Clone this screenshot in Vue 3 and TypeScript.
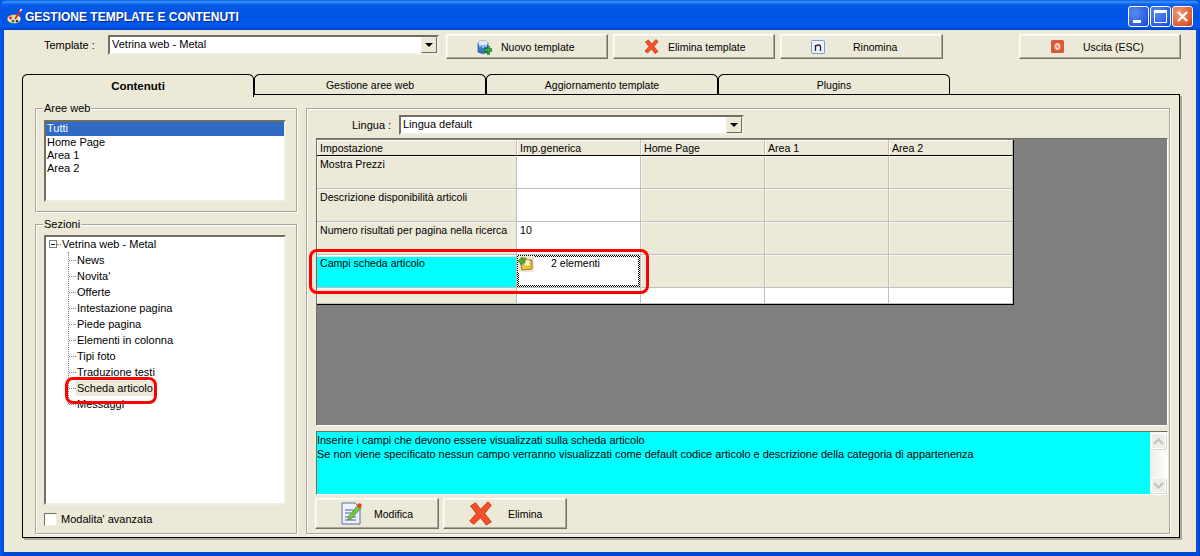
<script setup lang="ts">
interface Row { label: string; value: string; cls: string }
const tabs: string[] = ['Contenuti', 'Gestione aree web', 'Aggiornamento template', 'Plugins']
const areas: string[] = ['Tutti', 'Home Page', 'Area 1', 'Area 2']
const sections: string[] = ['News', "Novita'", 'Offerte', 'Intestazione pagina', 'Piede pagina', 'Elementi in colonna', 'Tipi foto', 'Traduzione testi', 'Scheda articolo', 'Messaggi']
const heads: string[] = ['Impostazione', 'Imp.generica', 'Home Page', 'Area 1', 'Area 2']
const rows: Row[] = [
  { label: 'Mostra Prezzi', value: '', cls: 'tall' },
  { label: 'Descrizione disponibilità articoli', value: '', cls: 'tall' },
  { label: 'Numero risultati per pagina nella ricerca', value: '10', cls: 'tall' },
]
</script>

<template>
  <div class="window">
    <header class="titlebar">
      <svg class="appicon" width="18" height="16" viewBox="0 0 18 16">
        <ellipse cx="8" cy="10" rx="7" ry="4.5" fill="#e8e4d8" stroke="#555" stroke-width=".7" />
        <circle cx="4.5" cy="9" r="1.4" fill="#e02020" />
        <circle cx="7" cy="12" r="1.5" fill="#1a8a2a" />
        <circle cx="11" cy="12" r="1.3" fill="#333" />
        <circle cx="6.5" cy="7" r="1.2" fill="#f0c020" />
        <path d="M9 10 L15 1" stroke="#e03020" stroke-width="2" />
        <path d="M14 2 L16 0" stroke="#fff" stroke-width="1.5" />
      </svg>
      <span class="title">GESTIONE TEMPLATE E CONTENUTI</span>
      <div class="wincontrols">
        <span class="wbtn"><i class="min"></i></span>
        <span class="wbtn"><i class="max"></i></span>
        <span class="wbtn close">
          <svg width="13" height="13" viewBox="0 0 13 13"><path d="M2 2 L11 11 M11 2 L2 11" stroke="#fff" stroke-width="2.4" /></svg>
        </span>
      </div>
    </header>

    <main class="client">
      <div class="toolbar">
        <span class="tlabel">Template :</span>
        <div class="combo tcombo"><span class="combotext">Vetrina web - Metal</span><span class="arrow"><i></i></span></div>
        <button class="btn tb b-new">
          <svg width="15" height="16" viewBox="0 0 15 16">
            <path d="M1 4 L1 13 Q6 16 11 13 L11 4 Z" fill="#3a78c8" stroke="#1c4a90" stroke-width=".7" />
            <ellipse cx="6" cy="4" rx="5" ry="2.4" fill="#dfe8f4" stroke="#8a9ab8" stroke-width=".7" />
            <path d="M3 2 L3 8 M6 1.5 L6 9 M9 2 L9 8" stroke="#e8eef8" stroke-width="1.2" />
            <path d="M8 9 H11 V7 H13 V9 H15 V12 H13 V15 H11 V12 H8 Z" transform="translate(-.6 .4)" fill="#30b040" stroke="#106020" stroke-width=".7" />
          </svg>
          <span>Nuovo template</span>
        </button>
        <button class="btn tb b-del">
          <svg width="15" height="15" viewBox="0 0 30 30"><path d="M3 6 L9 2 L15 10 L24 1 L28 5 L20 15 L28 25 L22 29 L15 20 L7 28 L2 24 L10 15 Z" fill="#f4502a" stroke="#c83010" stroke-width="1.5" /></svg>
          <span>Elimina template</span>
        </button>
        <button class="btn tb b-ren">
          <svg width="14" height="14" viewBox="0 0 14 14">
            <rect x=".5" y=".5" width="13" height="13" rx="1" fill="#eef3fb" stroke="#7a9ad8" />
            <path d="M4.5 11 V5 M4.5 6.5 Q5.5 5 7.5 5 Q9.5 5 9.5 7 V11" fill="none" stroke="#222" stroke-width="1.3" />
          </svg>
          <span>Rinomina</span>
        </button>
        <button class="btn tb b-exit">
          <svg width="13" height="13" viewBox="0 0 13 13">
            <rect width="13" height="13" rx="1.5" fill="#d8583a" />
            <circle cx="6.5" cy="6.5" r="3.6" fill="#e88a70" />
            <ellipse cx="6.5" cy="6.5" rx="1.8" ry="2.6" fill="none" stroke="#fbe4d8" stroke-width="1.1" />
          </svg>
          <span>Uscita (ESC)</span>
        </button>
      </div>

      <nav class="tabs">
        <div v-for="(t, i) in tabs" :key="t" class="tab" :class="{ active: i === 0 }">{{ t }}</div>
      </nav>

      <section class="panel">
        <div class="leftcol">
          <div class="group g-areas">
            <span class="legend">Aree web</span>
            <ul class="sunken listbox">
              <li v-for="(a, i) in areas" :key="a" :class="{ sel: i === 0 }">{{ a }}</li>
            </ul>
          </div>
          <div class="group g-sections">
            <span class="legend">Sezioni</span>
            <div class="sunken tree">
              <div class="root"><span class="exp"><i></i></span><span class="hdash"></span><span>Vetrina web - Metal</span></div>
              <ul class="children">
                <li v-for="s in sections" :key="s">
                  <span class="hdash"></span><span class="node" :class="{ hl: s === 'Scheda articolo' }">{{ s }}</span>
                </li>
              </ul>
              <span class="redbox rb-tree"></span>
            </div>
            <label class="check"><span class="cbox"></span>Modalita' avanzata</label>
          </div>
        </div>

        <div class="rightframe">
          <div class="langrow">
            <span class="llabel">Lingua :</span>
            <div class="combo lcombo"><span class="combotext">Lingua default</span><span class="arrow"><i></i></span></div>
          </div>
          <div class="gridbox">
            <div class="table">
              <div v-for="h in heads" :key="h" class="cell head">{{ h }}</div>
              <template v-for="r in rows" :key="r.label">
                <div class="cell fixed tall">{{ r.label }}</div>
                <div class="cell val tall">{{ r.value }}</div>
                <div class="cell fixed tall"></div>
                <div class="cell fixed tall"></div>
                <div class="cell fixed tall"></div>
              </template>
              <div class="cell cyan tall">Campi scheda articolo</div>
              <div class="cell focus tall">
                <div class="focusin">
                  <svg class="folder" width="16" height="16" viewBox="0 0 16 16">
                    <rect width="16" height="16" fill="#ece9d8" />
                    <path d="M2 4 L4 14 L14 13 L14 4 L9 4 L8 2 L4 2 Z" fill="#f0c840" stroke="#a07818" />
                    <path d="M6 4 H12 V10 H6 Z" fill="#fff6c0" stroke="#c0a040" stroke-width=".6" />
                    <path d="M0 5 L4 1 L4 3 L7 3 L7 7 L4 7 L4 9 Z" fill="#3cb040" stroke="#1a6a20" stroke-width=".5" />
                  </svg>
                  <span>2 elementi</span>
                </div>
              </div>
              <div class="cell fixed tall"></div>
              <div class="cell fixed tall"></div>
              <div class="cell fixed tall"></div>
              <div class="cell fixed"></div>
              <div class="cell val"></div>
              <div class="cell val"></div>
              <div class="cell val"></div>
              <div class="cell val"></div>
            </div>
            <span class="redbox rb-grid"></span>
          </div>
          <div class="desc">
            <div class="desctext">
              Inserire i campi che devono essere visualizzati sulla scheda articolo<br />
              Se non viene specificato nessun campo verranno visualizzati come default codice articolo e descrizione della categoria di appartenenza
            </div>
            <div class="scroll">
              <span class="sbtn"><svg width="11" height="7" viewBox="0 0 11 7"><path d="M1 6 L5.5 1.5 L10 6" fill="none" stroke="#c4c2b8" stroke-width="2" /></svg></span>
              <span class="sbtn"><svg width="11" height="7" viewBox="0 0 11 7"><path d="M1 1 L5.5 5.5 L10 1" fill="none" stroke="#c4c2b8" stroke-width="2" /></svg></span>
            </div>
          </div>
          <div class="actions">
            <button class="btn big b-mod">
              <svg width="21" height="23" viewBox="0 0 21 23">
                <path d="M1 1 H14 L19 6 V22 H1 Z" fill="#eef1f8" stroke="#5a6ea8" />
                <path d="M4 8 H12 M4 11 H10 M4 15 H15 M4 18 H15" stroke="#9aa8cc" stroke-width="2" />
                <path d="M7 18 L8 14 L17 3 L20 6 L10 17 Z" fill="#78c840" stroke="#3a8020" stroke-width=".7" />
                <circle cx="18.5" cy="3.5" r="2.2" fill="#e04030" />
              </svg>
              <span>Modifica</span>
            </button>
            <button class="btn big b-eli">
              <svg width="25" height="25" viewBox="0 0 30 30"><path d="M3 6 L9 2 L15 10 L24 1 L28 5 L20 15 L28 25 L22 29 L15 20 L7 28 L2 24 L10 15 Z" fill="#f4502a" stroke="#c83010" stroke-width="1" /></svg>
              <span>Elimina</span>
            </button>
          </div>
        </div>
      </section>
    </main>
  </div>
</template>

<style>
html, body { margin: 0; padding: 0; background: #0054e3; overflow: hidden; }
</style>

<style scoped>
* { box-sizing: border-box; }
.window {
  width: 1200px; height: 556px; display: flex; flex-direction: column;
  padding: 0 4px 4px; font: 11px/15px "Liberation Sans", Arial, sans-serif; color: #000;
  background: linear-gradient(90deg, #0a5ae8 0, #0055e5 2px, #0348d0 4px, #0348d0 1196px, #0055e5 1198px, #0030b8 100%);
  border-radius: 7px 7px 0 0; overflow: hidden;
}
.titlebar {
  height: 30px; margin: 0 -4px; padding: 3px 7px 0 6px; display: flex; align-items: center; flex: none;
  background: linear-gradient(180deg, #0a5fe0 0, #3a93ff 2px, #0d63ea 4px, #0256e6 9px, #0054e3 18px, #0058ee 25px, #0056e8 27px, #0040c8 30px);
}
.appicon { flex: none; }
.title {
  margin: 1px 0 0 1px; color: #fff; font-weight: 700; font-size: 12px; text-shadow: 1px 1px 0 #0f2a80; white-space: nowrap;
}
.wincontrols { margin-left: auto; display: flex; gap: 1px; }
.wbtn {
  position: relative; width: 21px; height: 21px; border: 1px solid #fff; border-radius: 3px; display: flex; align-items: center; justify-content: center;
  background: radial-gradient(circle at 30% 30%, #5a8cf0, #2c5ce0 70%, #1c44c0);
}
.wbtn.close { background: radial-gradient(circle at 30% 30%, #f09a78, #df5a30 70%, #c03818); }
.wbtn i.min { position: absolute; left: 4px; bottom: 3px; width: 8px; height: 3px; background: #fff; }
.wbtn i.max { width: 13px; height: 13px; border: 1px solid #fff; border-top-width: 3px; }

.client { flex: 1; min-height: 0; background: #ece9d8; display: flex; flex-direction: column; }

.toolbar { height: 25px; margin-top: 4px; display: flex; flex: none; position: relative; }
.tlabel { margin: 4px 0 0 40px; width: 64px; }
.combo {
  height: 20px; background: #fff; border: 2px solid; border-color: #716f64 #f1efe2 #f1efe2 #716f64;
  display: flex; justify-content: space-between; align-items: stretch;
}
.tcombo { width: 331px; margin-top: 1px; }
.combotext { padding: 0 0 0 2px; line-height: 15px; }
.arrow {
  width: 16px; background: #ece9d8; border: 1px solid; border-color: #f1efe2 #716f64 #716f64 #f1efe2; display: flex; align-items: center; justify-content: center;
}
.arrow i { width: 0; height: 0; border: 4px solid transparent; border-top: 4px solid #000; border-bottom: 0; }

.btn {
  display: flex; align-items: center; padding: 0; background: #ece9d8; font: inherit; color: #000;
  border: 1px solid; border-color: #fff #716f64 #716f64 #fff; box-shadow: inset -1px -1px 0 #aca899, inset 1px 1px 0 #f6f4ea; height: 25px;
}
.btn span { position: relative; top: 1px; font-size: 10.5px; }
.tb { width: 162px; margin-left: 6px; }
.tcombo + .tb { margin-left: 7px; }
.b-new { padding-left: 30px; gap: 9px; }
.b-del { padding-left: 30px; gap: 9px; margin-left: 5px; }
.b-ren { padding-left: 30px; gap: 28px; margin-left: 5px; width: 163px; }
.b-exit { padding-left: 31px; gap: 19px; margin-left: 76px; }

.tabs { display: flex; margin: 15px 0 0 18px; height: 20px; flex: none; position: relative; z-index: 1; }
.tab {
  width: 232px; height: 21px; text-align: center; line-height: 21px; background: #ece9d8; font-size: 10.5px;
  border: 1px solid #000; border-left-width: 1px; border-radius: 6px 6px 0 0 / 5px 5px 0 0; margin-right: 0;
}
.tab.active { font-weight: 700; height: 23px; border-bottom: 0; border-right-color: #000; font-size: 11.5px; line-height: 23px; }

.panel {
  width: 1158px; height: 444px; margin-left: 18px; flex: none; border: 1px solid #000; box-shadow: 2px 2px 0 #aca899;
  display: flex; padding: 13px 9px 3px 12px; gap: 9px;
}
.leftcol { width: 262px; display: flex; flex-direction: column; gap: 12px; }
.group { border: 1px solid #aca899; box-shadow: inset 1px 1px 0 #fff, 1px 1px 0 #fff; padding: 0 10px 0 8px; display: flex; flex-direction: column; }
.g-areas { height: 104px; }
.g-sections { height: 310px; }
.legend { margin: -8px 0 0 -1px; padding: 0 1px; align-self: flex-start; background: #ece9d8; height: 15px; }
.sunken { background: #fff; border: 2px solid; border-color: #716f64 #f1efe2 #f1efe2 #716f64; margin: 0; padding: 0; list-style: none; }
.listbox { height: 82px; margin-top: 4px; padding-top: 0; }
.listbox li { height: 13px; line-height: 13px; padding-left: 1px; white-space: nowrap; }
.listbox li.sel { background: #316ac5; color: #fff; height: 14px; }

.tree { height: 270px; margin-top: 3px; position: relative; padding: 0 0 0 3px; }
.root { display: flex; align-items: center; height: 14px; margin-bottom: 1px; }
.exp { width: 8px; height: 8px; border: 1px solid #808080; display: flex; align-items: center; justify-content: center; }
.exp i { width: 4px; height: 1px; background: #000; }
.root .hdash { width: 4px; margin-right: 1px; }
.hdash { display: inline-block; height: 1px; border-top: 1px dotted #808080; }
.children { list-style: none; margin: 0 0 0 19px; padding: 0; border-left: 1px dotted #808080; height: 152px; }
.children li { height: 16px; display: flex; align-items: center; }
.children .hdash { width: 7px; }
.node { padding: 0 1px; white-space: nowrap; }
.node.hl { background: #ece9d8; }

.redbox { position: absolute; border: 3px solid #f00; border-radius: 8px; pointer-events: none; z-index: 3; }
.rb-tree { left: 19px; top: 140px; width: 92px; height: 27px; }
.rb-grid { left: -8px; top: 110px; width: 340px; height: 45px; }

.check { display: flex; align-items: center; margin-top: 7px; height: 15px; }
.cbox { width: 13px; height: 13px; background: #fff; border: 1px solid; border-color: #716f64 #f1efe2 #f1efe2 #716f64; margin-right: 4px; flex: none; }

.rightframe { width: 864px; height: 426px; border: 1px solid #aca899; box-shadow: inset 1px 1px 0 #fff, 1px 1px 0 #fff; padding: 6px 0 0 9px; display: flex; flex-direction: column; }
.langrow { display: flex; height: 20px; flex: none; }
.llabel { margin: 3px 0 0 36px; width: 47px; }
.lcombo { width: 345px; }

.gridbox {
  position: relative; margin-top: 3px; width: 852px; height: 288px; flex: none; background: #808080; padding: 1px;
  border-top: 1px solid #716f64; border-left: 1px solid #716f64; border-right: 1px solid #fff; border-bottom: 1px solid #fff;
}
.table {
  display: grid; grid-template-columns: 200px 124px 124px 124px 124px; grid-template-rows: 16px repeat(4, 33px) 16px;
  width: 696px; border-right: 1px solid #000; border-bottom: 1px solid #000; box-sizing: content-box; margin-left: -1px;
}
.cell { border-right: 1px solid #c0bebe; border-bottom: 1px solid #c0bebe; padding: 1px 0 0 3px; white-space: nowrap; background: #ece9d8; font-size: 10.6px; line-height: 14px; overflow: hidden; }
.cell.head { border-bottom: 1px solid #000; box-shadow: inset 1px 1px 0 #fff; }
.cell.fixed { box-shadow: inset 1px 1px 0 #f8f7f0; }
.cell.val { background: #fff; }
.cell.cyan { background: #0ff; box-shadow: inset 0 1px 0 #fff, inset 0 2px 0 #ece9d8; }
.cell.focus { padding: 2px; background: repeating-conic-gradient(#000 0 25%, #fff 0 50%) 0 0 / 2px 2px; }
.focusin { background: #fff; height: 100%; position: relative; padding-left: 32px; line-height: 12px; }
.folder { position: absolute; left: -1px; top: -1px; }

.desc {
  margin-top: 5px; width: 852px; height: 64px; flex: none; display: flex; background: #0ff;
  border-top: 1px solid #716f64; border-left: 1px solid #716f64; border-right: 1px solid #fff; border-bottom: 1px solid #fff;
}
.desctext { flex: 1; line-height: 14px; padding: 1px 0 0 0; white-space: nowrap; font-size: 10.95px; }
.scroll { width: 17px; background: linear-gradient(90deg, #f0eee4, #fdfdfa); display: flex; flex-direction: column; justify-content: space-between; padding: 1px; }
.sbtn { width: 15px; height: 16px; background: #eeede6; border: 1px solid #fff; border-radius: 2px; display: flex; align-items: center; justify-content: center; box-shadow: 1px 1px 0 #dad8cc; }

.actions { display: flex; gap: 4px; margin: 3px 0 0 -1px; }
.big { width: 124px; height: 31px; }
.b-mod { padding-left: 25px; gap: 12px; }
.b-eli { padding-left: 24px; gap: 15px; }
</style>
